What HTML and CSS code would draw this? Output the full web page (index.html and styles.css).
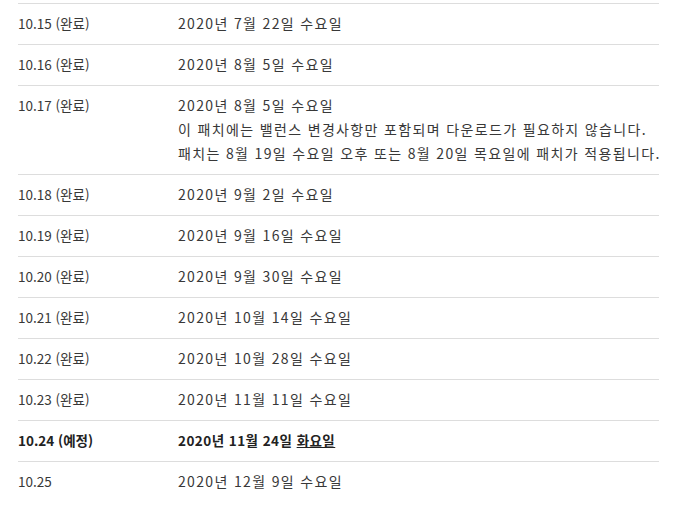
FILE: index.html
```html
<!DOCTYPE html>
<html lang="ko">
<head>
<meta charset="utf-8">
<link rel="stylesheet" href="styles.css">
</head>
<body>
<div class="schedule">
  <div class="row"><div class="ver">10.15 (완료)</div><div class="date">2020년 7월 22일 수요일</div></div>
  <div class="row"><div class="ver">10.16 (완료)</div><div class="date">2020년 8월 5일 수요일</div></div>
  <div class="row"><div class="ver">10.17 (완료)</div><div class="date">2020년 8월 5일 수요일<br>이 패치에는 밸런스 변경사항만 포함되며 다운로드가 필요하지 않습니다.<br>패치는 8월 19일 수요일 오후 또는 8월 20일 목요일에 패치가 적용됩니다.</div></div>
  <div class="row"><div class="ver">10.18 (완료)</div><div class="date">2020년 9월 2일 수요일</div></div>
  <div class="row"><div class="ver">10.19 (완료)</div><div class="date">2020년 9월 16일 수요일</div></div>
  <div class="row"><div class="ver">10.20 (완료)</div><div class="date">2020년 9월 30일 수요일</div></div>
  <div class="row"><div class="ver">10.21 (완료)</div><div class="date">2020년 10월 14일 수요일</div></div>
  <div class="row"><div class="ver">10.22 (완료)</div><div class="date">2020년 10월 28일 수요일</div></div>
  <div class="row"><div class="ver">10.23 (완료)</div><div class="date">2020년 11월 11일 수요일</div></div>
  <div class="row current"><div class="ver">10.24 (예정)</div><div class="date">2020년 11월 24일 <u class="day">화요일</u></div></div>
  <div class="row last"><div class="ver">10.25</div><div class="date">2020년 12월 9일 수요일</div></div>
</div>
</body>
</html>
```
FILE: styles.css
```css
html, body {
  margin: 0;
  background: #fff;
}
body {
  font-family: "Noto Sans CJK KR", "Noto Sans", sans-serif;
  font-size: 14px;
  color: #383838;
}
.schedule {
  margin: 3px 0 0 18px;
  width: 641px;
  border-top: 1px solid #ddd;
}
.row {
  display: flex;
  padding: 7px 0 9px;
  line-height: 24px;
  border-bottom: 1px solid #ddd;
}
.row.last {
  border-bottom: none;
}
.ver {
  width: 160px;
  flex: none;
  font-size: 13.5px;
}
.date {
  flex: 1;
  white-space: nowrap;
  letter-spacing: 1.35px;
}
.current {
  font-weight: bold;
  color: #222;
}
.current .date {
  font-size: 13.5px;
  letter-spacing: 0.45px;
}
.day {
  text-decoration: underline;
}
```
